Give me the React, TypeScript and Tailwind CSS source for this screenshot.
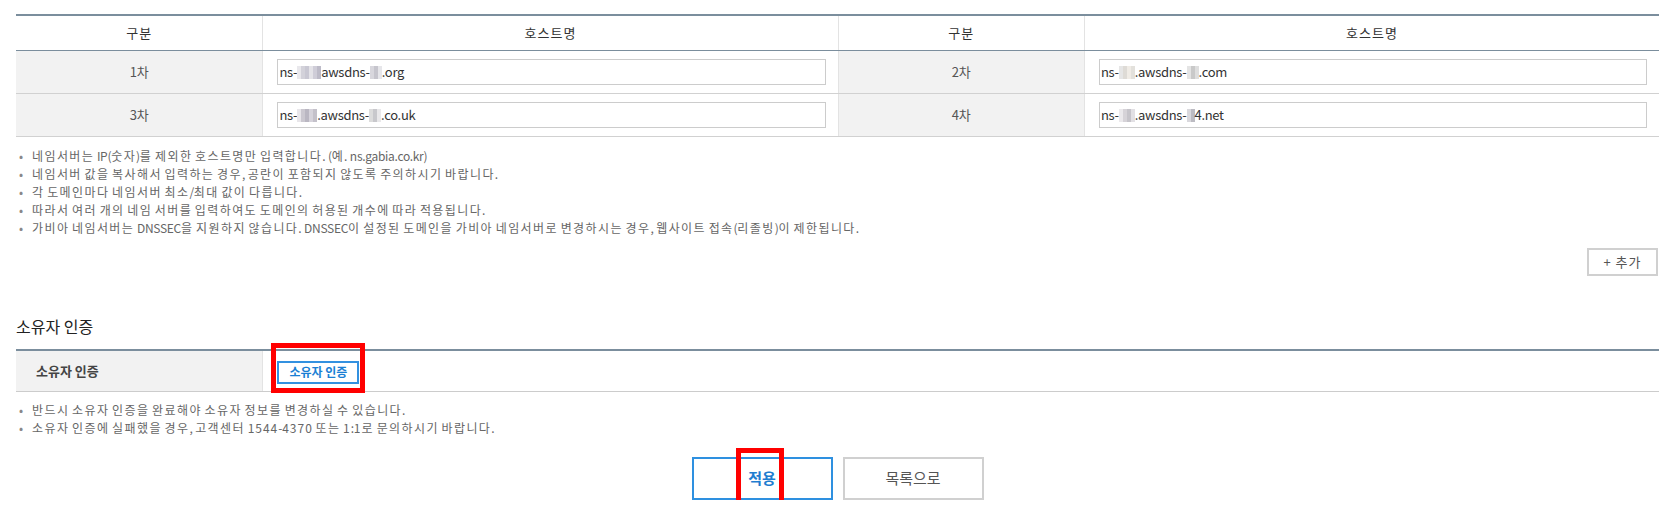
import React from 'react'

type Part = string | string[]

const hosts: { label: string; parts: Part[] }[] = [
  { label: '1차', parts: ['ns-', ['#e9e8ec', '#d3d2da', '#c9c8d3', '#e4e3e8', '#cfcdd8', '#bdbbc8'], 'awsdns-', ['#d8d7dd', '#c6c5cd', '#e6e6ea'], '.org'] },
  { label: '2차', parts: ['ns-', ['#e6e6e6', '#dedbd6', '#f0ece6', '#e3e1dc'], '.awsdns-', ['#e4e4e4', '#c9c9c9', '#dedede'], '.com'] },
  { label: '3차', parts: ['ns-', ['#e8e6ea', '#cbc8d0', '#bab7c2', '#d6d3db', '#c4c1ca'], '.awsdns-', ['#dcdcdc', '#c8c8cc', '#e9e8ea'], '.co.uk'] },
  { label: '4차', parts: ['ns-', ['#ebe9ec', '#d6d3d8', '#c6c4ca', '#e2e0e4'], '.awsdns-', ['#d9d8dd', '#bcbbc2'], '4.net'] },
]

const nsNotes = [
  '네임서버는 IP(숫자)를 제외한 호스트명만 입력합니다. (예. ns.gabia.co.kr)',
  '네임서버 값을 복사해서 입력하는 경우, 공란이 포함되지 않도록 주의하시기 바랍니다.',
  '각 도메인마다 네임서버 최소/최대 값이 다릅니다.',
  '따라서 여러 개의 네임 서버를 입력하여도 도메인의 허용된 개수에 따라 적용됩니다.',
  '가비아 네임서버는 DNSSEC을 지원하지 않습니다. DNSSEC이 설정된 도메인을 가비아 네임서버로 변경하시는 경우, 웹사이트 접속(리졸빙)이 제한됩니다.',
]

const ownerNotes = [
  '반드시 소유자 인증을 완료해야 소유자 정보를 변경하실 수 있습니다.',
  '소유자 인증에 실패했을 경우, 고객센터 1544-4370 또는 1:1로 문의하시기 바랍니다.',
]

// hangul and digits in the original render wider than latin, so space the runs apart
function Spaced({ text }: { text: string }) {
  const runs = text.split(/([\uAC00-\uD7A3]+|[0-9]+|\s+)/).filter(Boolean)
  return (
    <>
      {runs.map((r, i) => {
        if (/[\uAC00-\uD7A3]/.test(r)) return <span key={i} className="tracking-[1.4px]">{r}</span>
        if (/[0-9]/.test(r)) return <span key={i} className="tracking-[1px]">{r}</span>
        if (/\s/.test(r)) return <span key={i}>{r}</span>
        return <span key={i} className="tracking-[-0.3px]">{r}</span>
      })}
    </>
  )
}

// blurred chunk of the hostname
function Mosaic({ colors }: { colors: string[] }) {
  return (
    <span className="inline-flex h-[13px] align-[-2px]">
      {colors.map((c, i) => (
        <span key={i} className="w-[4px] h-full" style={{ backgroundColor: c }} />
      ))}
    </span>
  )
}

function HostInput({ parts }: { parts: Part[] }) {
  return (
    <div className="w-full h-[26px] border border-[#cccccc] bg-white flex items-center pl-[1px] text-[13px] text-[#333] tracking-[-0.3px] whitespace-nowrap overflow-hidden">
      {parts.map((p, i) => (typeof p === 'string' ? <span key={i}>{p}</span> : <Mosaic key={i} colors={p} />))}
    </div>
  )
}

function Notes({ items }: { items: string[] }) {
  return (
    <ul className="text-[12px] leading-[18px] text-[#666]">
      {items.map((t) => (
        <li key={t} className="flex whitespace-pre">
          <span className="w-[16px] pl-[3px] text-[#888]">•</span>
          <span>
            <Spaced text={t} />
          </span>
        </li>
      ))}
    </ul>
  )
}

export default function App() {
  const rows = [
    [hosts[0], hosts[1]],
    [hosts[2], hosts[3]],
  ]

  return (
    <div className="bg-white pl-[16px] pr-[10px] pt-[14px] font-['Noto_Sans_CJK_KR',sans-serif]">
      {/* 네임서버 */}
      <div className="border-t-2 border-[#7b8e9d]">
        <div className="grid grid-cols-[15fr_35fr_15fr_35fr] h-[35px] border-b border-[#7b8e9d] text-[13px] text-[#333] tracking-[1px]">
          <div className="flex items-center justify-center">구분</div>
          <div className="flex items-center justify-center border-l border-[#e3e3e3]">호스트명</div>
          <div className="flex items-center justify-center border-l border-[#e3e3e3]">구분</div>
          <div className="flex items-center justify-center border-l border-[#e3e3e3]">호스트명</div>
        </div>
        {rows.map((row, r) => (
          <div key={r} className="grid grid-cols-[15fr_35fr_15fr_35fr] h-[43px] border-b border-[#d1d1d1]">
            {row.map((h, c) => (
              <React.Fragment key={h.label}>
                <div
                  className={
                    c === 0
                      ? 'flex items-center justify-center bg-[#f2f2f2] text-[13px] text-[#555]'
                      : 'flex items-center justify-center bg-[#f2f2f2] text-[13px] text-[#555] border-l border-[#e3e3e3]'
                  }
                >
                  {h.label}
                </div>
                <div className="flex items-center pl-[14px] pr-[12px] border-l border-[#e3e3e3]">
                  <HostInput parts={h.parts} />
                </div>
              </React.Fragment>
            ))}
          </div>
        ))}
      </div>

      <div className="mt-[10px]">
        <Notes items={nsNotes} />
      </div>

      <div className="flex justify-end mt-[11px] pr-[1px]">
        <button className="w-[71px] h-[28px] border-2 border-[#d0d0d0] bg-white text-[13px] text-[#555] tracking-[1px]">+ 추가</button>
      </div>

      {/* 소유자 인증 */}
      <h3 className="mt-[38px] text-[16px] leading-[24px] text-[#222]">소유자 인증</h3>

      <div className="mt-[11px] border-t-2 border-[#7b8e9d]">
        <div className="grid grid-cols-[15fr_85fr] h-[41px] border-b border-[#cccccc]">
          <div className="flex items-center pl-[20px] bg-[#f2f2f2] text-[13px] font-bold text-[#444]">소유자 인증</div>
          <div className="flex items-center pl-[14px] border-l border-[#e3e3e3]">
            <div className="relative">
              <button className="w-[82px] h-[23px] border-2 border-[#3391e0] bg-white text-[12px] font-bold text-[#1a7fd4] leading-none">
                소유자 인증
              </button>
              <div className="absolute -left-[6px] -top-[15px] w-[94px] h-[50px] border-[5px] border-[#ff0000]" />
            </div>
          </div>
        </div>
      </div>

      <div className="mt-[9px]">
        <Notes items={ownerNotes} />
      </div>

      <div className="flex justify-center gap-[10px] mt-[20px]">
        <div className="relative">
          <button className="w-[141px] h-[43px] border-2 border-[#2e90e0] bg-white text-[15px] font-bold text-[#1f7dd0]">적용</button>
          <div className="absolute left-[44px] -top-[9px] w-[48px] h-[62px] border-[5px] border-[#ff0000]" />
        </div>
        <button className="w-[141px] h-[43px] border-2 border-[#d0d0d0] bg-white text-[15px] text-[#555]">목록으로</button>
      </div>
    </div>
  )
}
